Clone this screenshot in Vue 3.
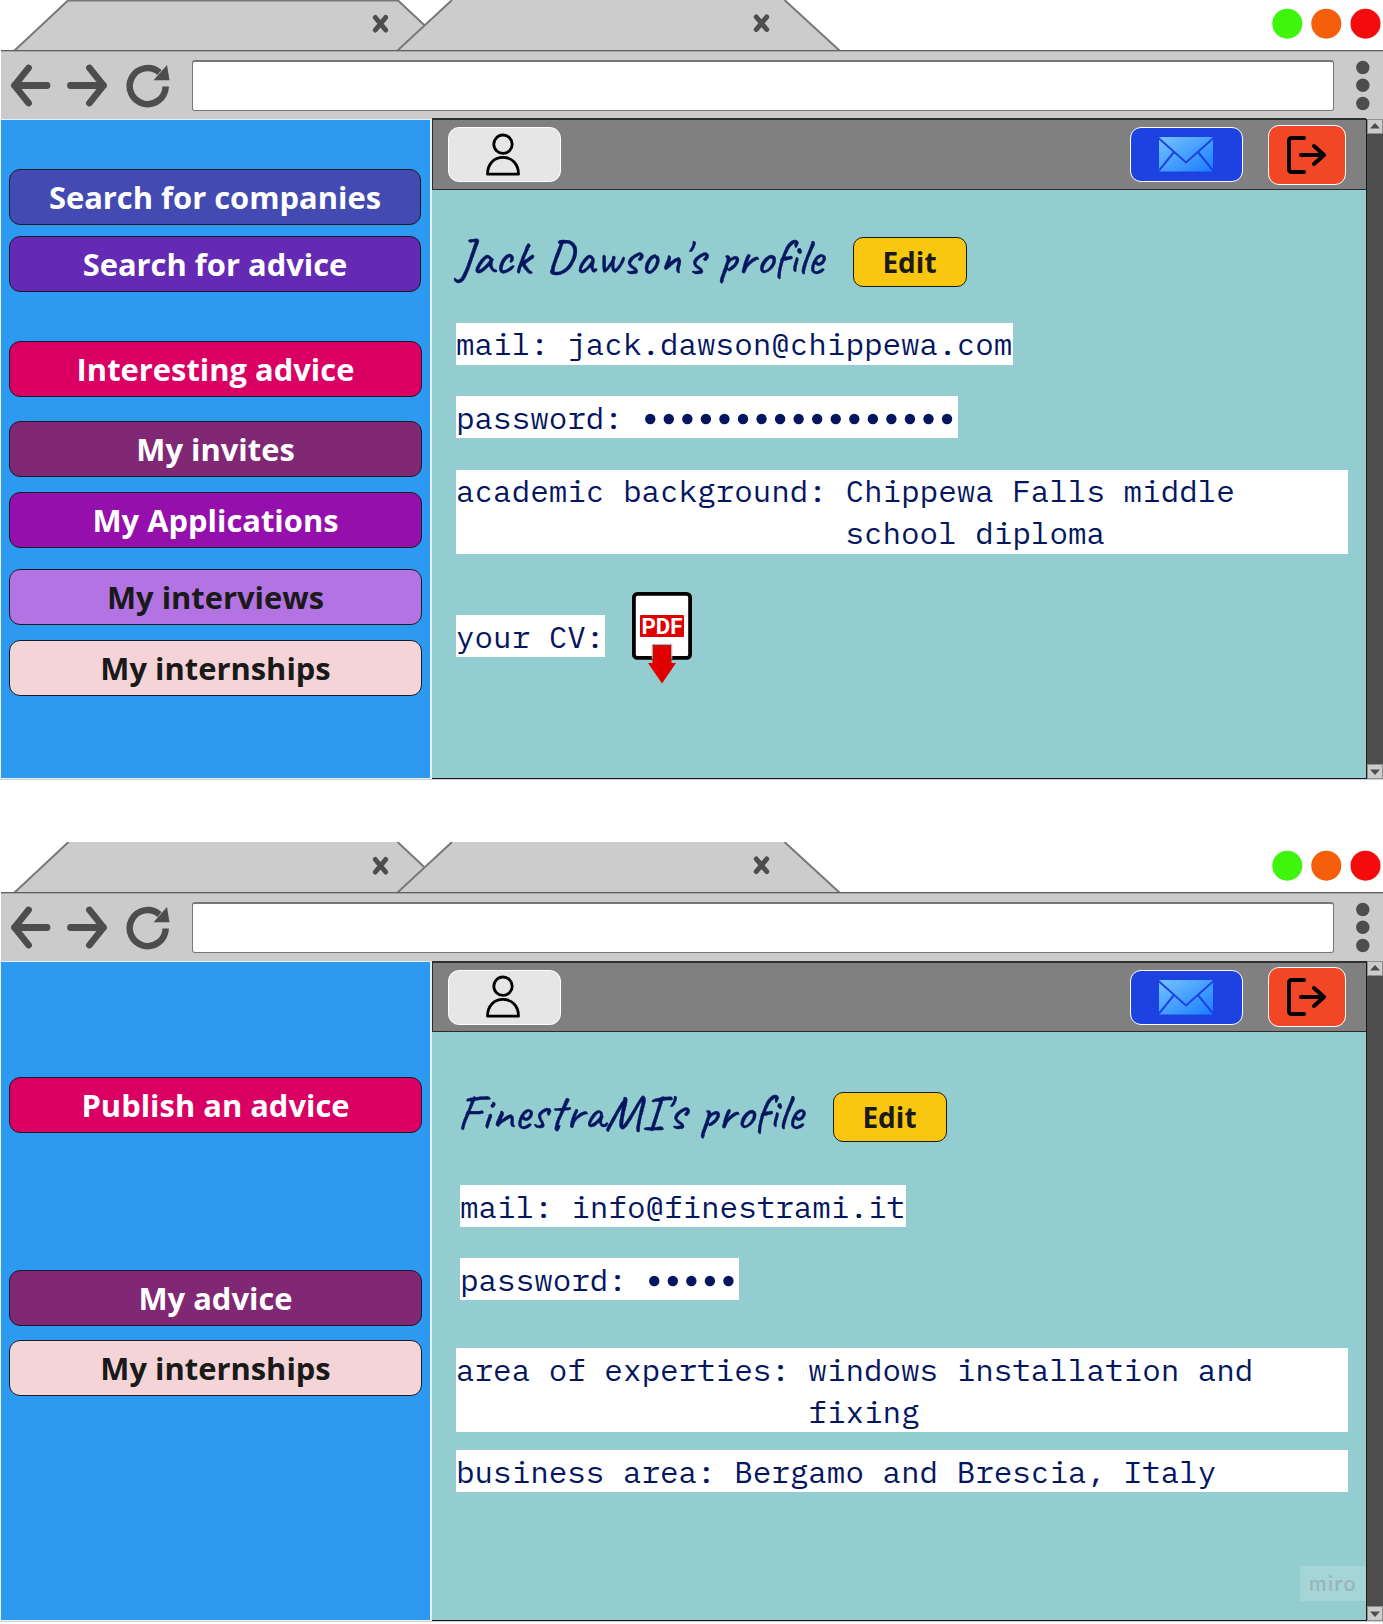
<script setup>
const windows = [
  {
    id: 'student',
    title: "Jack Dawson's profile",
    titleWidth: 367,
    links: [
      { label: 'Search for companies', tone: 'indigo' },
      { label: 'Search for advice', tone: 'violet' },
      { label: 'Interesting advice', tone: 'pink' },
      { label: 'My invites', tone: 'plum' },
      { label: 'My Applications', tone: 'purple' },
      { label: 'My interviews', tone: 'lilac' },
      { label: 'My internships', tone: 'blush' },
    ],
    fields: [
      { key: 'mail', text: 'mail: jack.dawson@chippewa.com' },
      { key: 'password', label: 'password: ', dots: 17 },
      { key: 'background', label: 'academic background: ', text: 'Chippewa Falls middle\nschool diploma', wide: true },
      { key: 'cv', text: 'your CV:', pdf: true },
    ],
  },
  {
    id: 'company',
    title: "FinestraMI's profile",
    titleWidth: 346,
    links: [
      { label: 'Publish an advice', tone: 'pink' },
      { label: 'My advice', tone: 'plum' },
      { label: 'My internships', tone: 'blush' },
    ],
    fields: [
      { key: 'mail', text: 'mail: info@finestrami.it' },
      { key: 'password', label: 'password: ', dots: 5 },
      { key: 'expertise', label: 'area of experties: ', text: 'windows installation and\nfixing', wide: true },
      { key: 'area', text: 'business area: Bergamo and Brescia, Italy', wide: true },
    ],
    watermark: 'miro',
  },
]
</script>

<template>
  <div class="board">
    <section v-for="w in windows" :key="w.id" class="window" :class="w.id">
      <svg class="tabs" width="1383" height="50" viewBox="0 0 1383 50">
        <path class="tab" d="M14 51 68.500 0H397.500L452 51Z" />
        <path v-if="w.id === 'student'" class="edge" d="M68 .5H398" />
        <path class="edge" d="M14 51 68.500 0M397.500 0 452 51" />
        <path class="tab" d="M397 51 451.500 0H784.500L840 51Z" />
        <path class="edge" d="M397 51 452 0M784.500 0 840 51" />
        <path class="close" d="M375.300 17.500 385.700 30M385.700 17.500 375.300 30" />
        <path class="close" d="M756.300 17 766.700 29.500M766.700 17 756.300 29.500" />
        <circle cx="1287.300" cy="23.700" r="15" fill="#40f50d" />
        <circle cx="1326.300" cy="23.700" r="15" fill="#f55f0c" />
        <circle cx="1365.500" cy="23.700" r="15" fill="#f60b0c" />
      </svg>

      <div class="toolbar">
        <svg class="nav" width="191" height="68" viewBox="1 51 191 68">
          <g fill="none" stroke="#4d4d4d" stroke-width="6.800" stroke-linecap="round" stroke-linejoin="round">
            <path d="M47 85.500H14.500M28.500 68 14.500 85.500 28.500 103" />
            <path d="M70.500 85.500H103.500M89.500 68 103.500 85.500 89.500 103" />
          </g>
          <path d="M165.700 86.500A18 18 0 1 1 159.500 72.500" fill="none" stroke="#4d4d4d" stroke-width="6.500" />
          <path d="M167 65 169.500 80.300H153.500Z" fill="#4d4d4d" />
        </svg>
        <div class="address"></div>
        <svg class="more" width="49" height="68" viewBox="1334 51 49 68" fill="#4d4d4d">
          <circle cx="1362.800" cy="67.500" r="6.700" />
          <circle cx="1362.800" cy="85.200" r="6.700" />
          <circle cx="1362.800" cy="103.500" r="6.700" />
        </svg>
      </div>

      <div class="body">
        <nav class="sidebar">
          <a v-for="l in w.links" :key="l.label" class="link" :class="l.tone">{{ l.label }}</a>
        </nav>

        <main class="page">
          <header class="bar">
            <span class="btn user">
              <svg width="36" height="44" viewBox="0 0 36 44" fill="none" stroke="#000" stroke-width="2.800">
                <circle cx="18" cy="11.200" r="9.200" />
                <path d="M2.500 41.200C2.500 31 9 24.400 18 24.400S33.500 31 33.500 41.200Z" stroke-linejoin="round" />
              </svg>
            </span>
            <span class="btn mail">
              <svg width="54" height="35" viewBox="0 0 54 35">
                <defs>
                  <linearGradient :id="'sky-' + w.id" x1="0" y1="0" x2="1" y2="1">
                    <stop offset="0" stop-color="#74c4ff" />
                    <stop offset="1" stop-color="#1a7cff" />
                  </linearGradient>
                </defs>
                <rect width="54" height="34.500" rx="1.500" :fill="`url(#sky-${w.id})`" />
                <path d="M0 1.500 27 25.500 54 1.500M0 33.500 15 15M54 33.500 39 15" fill="none" stroke="#1c43e2" stroke-width="2" />
              </svg>
            </span>
            <span class="btn exit">
              <svg width="40" height="40" viewBox="0 0 40 40" fill="none" stroke="#000" stroke-width="4" stroke-linecap="round" stroke-linejoin="round">
                <path d="M18 3H6Q3 3 3 6V34Q3 37 6 37H18" />
                <path d="M15 20H38M28 11 38 20 28 29" />
              </svg>
            </span>
          </header>

          <div class="content">
            <div class="heading">
              <svg class="name" height="50" overflow="visible">
                <text x="0" y="36.500" :textLength="w.titleWidth" lengthAdjust="spacingAndGlyphs">{{ w.title }}</text>
              </svg>
              <span class="edit">Edit</span>
            </div>

            <div v-for="f in w.fields" :key="f.key" class="row" :class="f.key">
              <div class="field" :class="{ wide: f.wide }">
                <span v-if="f.label">{{ f.label }}</span>
                <span v-if="f.text">{{ f.text }}</span>
                <svg v-if="f.dots" class="secret" :width="f.dots * 18.55" height="42">
                  <circle v-for="n in f.dots" :key="n" :cx="n * 18.55 - 9.3" cy="23" r="5.200" />
                </svg>
              </div>
              <svg v-if="f.pdf" class="pdf" width="60" height="92" viewBox="0 0 60 92">
                <rect x="1.900" y="1.900" width="56.200" height="64" rx="3.500" fill="#fff" stroke="#000" stroke-width="3.800" />
                <rect x="8" y="23" width="44" height="22" rx="1" fill="#e10000" />
                <text class="pdf-text" x="30" y="41.500" text-anchor="middle" textLength="41" lengthAdjust="spacingAndGlyphs">PDF</text>
                <path d="M20.500 52.500H39.500V71H44L30 91.500 16 71H20.500Z" fill="#e10000" />
                <path d="M20.200 67V52.300H39.800V67" fill="none" stroke="#93c9c9" stroke-width="1" />
              </svg>
            </div>
          </div>
          <div v-if="w.watermark" class="watermark">{{ w.watermark }}</div>
        </main>

        <aside class="scroll">
          <svg class="cap" width="16" height="15"><path d="M3 9.500 8 4 13 9.500Z" /></svg>
          <svg class="cap" width="16" height="15"><path d="M3 5.500 8 11 13 5.500Z" /></svg>
        </aside>
      </div>
    </section>
  </div>
</template>

<style>
body {
  margin: 0;
  background: #fff;
}
</style>

<style scoped>
.board {
  width: 1383px;
  height: 1624px;
  overflow: hidden;
  display: flex;
  flex-direction: column;
  gap: 62px;
  font-family: "Open Sans", "Noto Sans", sans-serif;
}
.window {
  height: 780px;
  flex: none;
}
.tabs {
  display: block;
}
.tab {
  fill: #cccccc;
}
.edge {
  fill: none;
  stroke: #787878;
  stroke-width: 2;
}
.close {
  fill: none;
  stroke: #4d4d4d;
  stroke-width: 5;
  stroke-linecap: round;
}
.toolbar {
  box-sizing: border-box;
  height: 69px;
  margin-left: 1px;
  display: flex;
  background: #cbcbcb;
  border-top: 1px solid #5f5f5f;
  box-shadow: inset 0 1px #a8a8a8;
}
.nav,
.more {
  flex: none;
}
.address {
  flex: 1;
  box-sizing: border-box;
  height: 51px;
  margin-top: 9px;
  background: #fff;
  border: 1.500px solid #777;
  border-top-width: 2px;
  border-radius: 3px;
}
.body {
  display: flex;
  height: 660px;
  border-bottom: 1px solid #cfcfcf;
}
.sidebar {
  box-sizing: border-box;
  width: 432px;
  padding: 49px 8px 0 8px;
  border: 1px solid #e6f1fb;
  border-right-width: 2px;
  background: #2d9af1;
  display: flex;
  flex-direction: column;
}
.link {
  box-sizing: border-box;
  height: 56px;
  flex: none;
  border: 1px solid #1a1a2a;
  border-radius: 11px;
  color: #fff;
  font-size: 30.900px;
  font-weight: 700;
  line-height: 54px;
  text-align: center;
}
.student .link {
  margin-bottom: 11px;
}
.student .indigo,
.student .violet {
  margin-right: 1px;
}
.student .violet {
  margin-bottom: 49px;
}
.student .pink {
  margin-bottom: 24px;
}
.student .plum {
  margin-bottom: 15px;
}
.student .purple {
  margin-bottom: 21px;
}
.student .lilac {
  margin-bottom: 15px;
}
.company .pink {
  margin-top: 66px;
}
.company .plum {
  margin-top: 137px;
}
.company .blush {
  margin-top: 14px;
}
.indigo { background: #434bb2; }
.violet { background: #652ab3; }
.pink { background: #da0063; }
.plum { background: #812874; }
.purple { background: #950fac; }
.lilac { background: #b473e2; color: #1a1a1a; }
.blush { background: #f4d4d6; color: #1a1a1a; }

.page {
  box-sizing: border-box;
  position: relative;
  width: 935px;
  background: #94cdcf;
  border-right: 1px solid #1a1a1a;
  border-bottom: 1px solid #1a1a1a;
}
.bar {
  box-sizing: border-box;
  height: 72px;
  margin-top: -1px;
  padding: 0 20px 0 14.500px;
  display: flex;
  align-items: center;
  background: #808080;
  border: 1px solid #2b2b2b;
  border-top: 2px solid #2b3131;
  border-right: 0;
}
.company .bar {
  height: 71px;
  margin-top: 0;
}
.btn {
  box-sizing: border-box;
  display: flex;
  align-items: center;
  justify-content: center;
  border: 1px solid #fff;
  border-radius: 11px;
}
.user {
  width: 113.500px;
  height: 55px;
  background: #e6e6e6;
}
.user svg {
  margin-right: 2px;
}
.mail {
  width: 113px;
  height: 55px;
  margin-left: auto;
  background: #1c43e2;
}
.mail svg {
  margin-right: 1px;
}
.exit {
  width: 78px;
  height: 60px;
  margin-left: 25px;
  background: #f24726;
}
.exit svg {
  margin-right: 2px;
}
.content {
  padding: 47px 18px 0 24px;
}
.company .content {
  padding-top: 60px;
}
.heading {
  display: flex;
  height: 50px;
}
.name {
  flex: none;
  width: 397px;
}
.company .name {
  width: 376px;
  margin-left: 1px;
}
.name text {
  font-family: Caveat, "Lato", sans-serif;
  font-size: 50px;
  fill: #051660;
  stroke: #051660;
  stroke-width: 0.400px;
}
.edit {
  box-sizing: border-box;
  width: 114px;
  height: 50px;
  padding-right: 1px;
  border: 1px solid #1a1a1a;
  border-radius: 10px;
  background: #fac710;
  color: #1a1a1a;
  font-size: 28px;
  font-weight: 700;
  line-height: 48px;
  text-align: center;
}
.row {
  display: flex;
  align-items: flex-start;
}
.field {
  box-sizing: border-box;
  display: flex;
  white-space: pre;
  min-height: 42px;
  padding-right: 1px;
  background: #fff;
  color: #051660;
  font-family: "IBM Plex Mono", "Liberation Mono", monospace;
  font-size: 30.920px;
  line-height: 42px;
}
.wide {
  flex: 1;
}
.company .field,
.password .field {
  height: 42px;
  padding-top: 1px;
}
.company .expertise .field {
  height: 84px;
}
.secret {
  margin-top: -1px;
  fill: #051660;
}
.student .mail.row {
  margin-top: 36px;
}
.row.mail {
  width: auto;
  height: auto;
  background: none;
  margin-left: 0;
}
.password {
  margin-top: 31px;
}
.background {
  margin-top: 32px;
}
.cv {
  margin-top: 38px;
}
.cv .field {
  height: 42px;
  margin-top: 23px;
  padding-top: 1px;
}
.pdf {
  margin-left: 27px;
}
.pdf-text {
  font-family: Roboto, sans-serif;
  font-size: 21.500px;
  font-weight: 700;
  fill: #fff;
}
.company .mail.row {
  margin-top: 43px;
  padding-left: 4px;
}
.company .password {
  padding-left: 4px;
}
.expertise {
  margin-top: 48px;
}
.area {
  margin-top: 18px;
}
.watermark {
  position: absolute;
  right: 0;
  bottom: 19px;
  box-sizing: border-box;
  width: 66px;
  height: 35px;
  background: #a4d5d7;
  color: #9cb4bf;
  font-family: Lato, sans-serif;
  font-size: 21px;
  font-weight: 600;
  letter-spacing: 1.500px;
  line-height: 33px;
  text-align: center;
}
.scroll {
  flex: 1;
  display: flex;
  flex-direction: column;
  justify-content: space-between;
  background: #4d4d4d;
}
.cap {
  display: block;
  background: #cccccc;
  fill: #4d4d4d;
  outline: 1px solid #8f8f8f;
  outline-offset: -1px;
}
</style>
